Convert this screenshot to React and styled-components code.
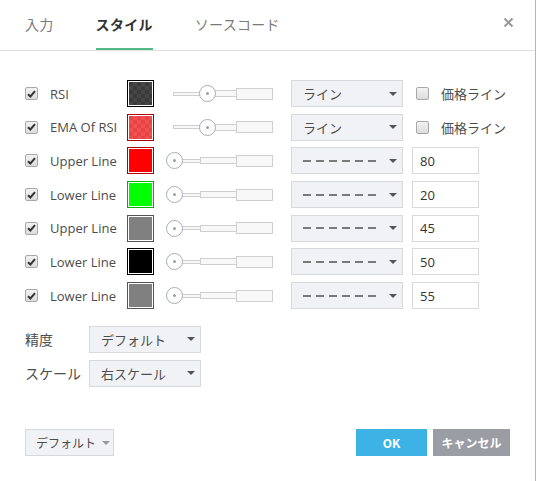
import React from "react";
import styled, { createGlobalStyle, css } from "styled-components";

const Global = createGlobalStyle`
  html, body { margin: 0; padding: 0; background: #fff; }
  body { font-family: "Open Sans", "Noto Sans CJK JP", sans-serif; color: #4d4d4d; }
  * { box-sizing: border-box; }
`;

const Dialog = styled.div`
  width: 536px;
  height: 481px;
  border-right: 1px solid #b5b5b5;
  display: flex;
  flex-direction: column;
  background: #fff;
`;

const Header = styled.div`
  height: 51px;
  border-bottom: 1px solid #e0e0e0;
  display: flex;
  align-items: flex-start;
  padding-left: 25px;
  padding-right: 21px;
  gap: 42px;
`;

const Tab = styled.div`
  height: 50px;
  line-height: 48px;
  font-size: 14px;
  font-family: "Noto Sans CJK JP", sans-serif;
  color: ${(p) => (p.$active ? "#333" : "#7a7a7a")};
  font-weight: ${(p) => (p.$active ? 700 : 400)};
  border-bottom: 2px solid ${(p) => (p.$active ? "#53b987" : "transparent")};
  letter-spacing: 0.3px;
`;

const Close = styled.div`
  margin-left: auto;
  margin-top: 17px;
  width: 11px;
  height: 11px;
  display: flex;
`;

const Body = styled.div`
  padding: 29px 0 0 25px;
  display: flex;
  flex-direction: column;
`;

const Rows = styled.div`
  display: flex;
  flex-direction: column;
  gap: 6.7px;
`;

const Row = styled.div`
  height: 27px;
  display: flex;
  align-items: center;
`;

const CheckBox = styled.div`
  width: 13px;
  height: 13px;
  border: 1px solid #a8a8a8;
  border-radius: 2px;
  background: linear-gradient(#f2f2f2, #dcdcdc);
  display: flex;
  align-items: center;
  justify-content: center;
  flex: none;
`;

const Label = styled.div`
  width: 77px;
  margin-left: 12px;
  font-size: 13px;
  color: #4d4d4d;
  white-space: nowrap;
`;

const Swatch = styled.div`
  width: 27px;
  height: 27px;
  border: 1px solid ${(p) => p.$border};
  padding: 1px;
  background: #fff;
  flex: none;
`;

const SwatchFill = styled.div`
  width: 100%;
  height: 100%;
  ${(p) =>
    p.$checker
      ? css`
          background: repeating-conic-gradient(${p.$a} 0 25%, ${p.$b} 0 50%) 0 0 / 8px 8px;
        `
      : css`
          background: ${p.$a};
        `}
`;

const Slider = styled.div`
  position: relative;
  width: 107px;
  height: 27px;
  margin-left: 12px;
  flex: none;
  display: flex;
  align-items: center;
  padding-left: 7px;
`;

const Seg = styled.div`
  height: ${(p) => p.$h}px;
  width: ${(p) => p.$w}px;
  border: 1px solid #cfcfcf;
  border-right: ${(p) => (p.$last ? "1px solid #cfcfcf" : "none")};
  background: #f8f8f8;
  flex: none;
`;

const Thumb = styled.div`
  position: absolute;
  top: 5px;
  width: 17px;
  height: 17px;
  border-radius: 50%;
  border: 1px solid #a9adb8;
  background: #fff;
  display: flex;
  align-items: center;
  justify-content: center;
  &::after {
    content: "";
    width: 3px;
    height: 3px;
    border-radius: 50%;
    background: #9a9ea8;
  }
`;

const Select = styled.div`
  width: ${(p) => p.$w || 112}px;
  height: 27px;
  margin-left: ${(p) => p.$ml || 0}px;
  background: #f1f2f5;
  border: 1px solid #d8d9dc;
  display: flex;
  align-items: center;
  padding: 0 5px 0 11px;
  font-size: 13px;
  font-family: "Noto Sans CJK JP", sans-serif;
  color: #4d4d4d;
  flex: none;
`;

const SelectText = styled.span`
  flex: 1;
`;

const Arrow = styled.span`
  width: 0;
  height: 0;
  margin-left: auto;
  border-left: 4px solid transparent;
  border-right: 4px solid transparent;
  border-top: 4px solid ${(p) => p.$c || "#555"};
`;

const Dashes = styled.div`
  width: 73px;
  height: 2px;
  background: repeating-linear-gradient(to right, #7a7a7a 0 8px, transparent 8px 13px);
`;

const PriceLine = styled.div`
  display: flex;
  align-items: center;
  margin-left: 13px;
  gap: 12px;
  font-size: 13px;
  font-family: "Noto Sans CJK JP", sans-serif;
  color: #4d4d4d;
`;

const NumInput = styled.div`
  width: 67px;
  height: 27px;
  margin-left: 9px;
  border: 1px solid #d9d9d9;
  background: #fff;
  font-size: 13px;
  color: #333;
  display: flex;
  align-items: center;
  padding-left: 7px;
`;

const Settings = styled.div`
  margin-top: 17px;
  display: flex;
  flex-direction: column;
  gap: 8px;
`;

const SetRow = styled.div`
  display: flex;
  align-items: center;
  height: 26px;
`;

const SetLabel = styled.div`
  width: 64px;
  font-size: 14px;
  font-family: "Noto Sans CJK JP", sans-serif;
  color: #4d4d4d;
`;

const Footer = styled.div`
  margin-top: 43px;
  display: flex;
  align-items: center;
  padding: 0 25px;
`;

const DefaultBtn = styled.div`
  width: 89px;
  height: 27px;
  background: #f1f2f5;
  border: 1px solid #d8d9dc;
  display: flex;
  align-items: center;
  gap: 6px;
  padding-left: 10px;
  font-size: 12px;
  font-family: "Noto Sans CJK JP", sans-serif;
  color: #4d4d4d;
`;

const Btn = styled.div`
  height: 27px;
  width: ${(p) => p.$w}px;
  background: ${(p) => p.$bg};
  color: #fff;
  font-weight: 700;
  font-size: 12px;
  font-family: "Noto Sans CJK JP", sans-serif;
  display: flex;
  align-items: center;
  justify-content: center;
  margin-left: ${(p) => p.$ml || 0}px;
`;

const Check = () => (
  <svg width="9" height="8" viewBox="0 0 9 8">
    <path d="M1 4.2 L3.4 6.5 L8 1.2" fill="none" stroke="#333" strokeWidth="2" />
  </svg>
);

const rows = [
  { label: "RSI", border: "#000", a: "#474747", b: "#3a3a3a", checker: true, kind: "line" },
  { label: "EMA Of RSI", border: "#b10000", a: "#f25050", b: "#e54545", checker: true, kind: "line" },
  { label: "Upper Line", border: "#b00000", a: "#ff0000", kind: "level", value: "80" },
  { label: "Lower Line", border: "#00b000", a: "#00ff00", kind: "level", value: "20" },
  { label: "Upper Line", border: "#555", a: "#808080", kind: "level", value: "45" },
  { label: "Lower Line", border: "#000", a: "#000000", kind: "level", value: "50" },
  { label: "Lower Line", border: "#555", a: "#808080", kind: "level", value: "55" },
];

export default function App() {
  return (
    <>
      <Global />
      <Dialog>
        <Header>
          <Tab>入力</Tab>
          <Tab $active>スタイル</Tab>
          <Tab>ソースコード</Tab>
          <Close>
            <svg width="11" height="11" viewBox="0 0 11 11">
              <path d="M1.5 1.5 L9.5 9.5 M9.5 1.5 L1.5 9.5" stroke="#999" strokeWidth="2" />
            </svg>
          </Close>
        </Header>
        <Body>
          <Rows>
            {rows.map((r, i) => (
              <Row key={i}>
                <CheckBox>
                  <Check />
                </CheckBox>
                <Label>{r.label}</Label>
                <Swatch $border={r.border}>
                  <SwatchFill $a={r.a} $b={r.b} $checker={r.checker} />
                </Swatch>
                <Slider>
                  <Seg $w={27} $h={4} />
                  <Seg $w={36} $h={7} />
                  <Seg $w={37} $h={12} $last />
                  <Thumb style={{ left: r.kind === "line" ? 33 : 0 }} />
                </Slider>
                {r.kind === "line" ? (
                  <>
                    <Select $ml={18} $w={112}>
                      <SelectText>ライン</SelectText>
                      <Arrow />
                    </Select>
                    <PriceLine>
                      <CheckBox />
                      価格ライン
                    </PriceLine>
                  </>
                ) : (
                  <>
                    <Select $ml={18} $w={112}>
                      <Dashes />
                      <Arrow />
                    </Select>
                    <NumInput>{r.value}</NumInput>
                  </>
                )}
              </Row>
            ))}
          </Rows>
          <Settings>
            <SetRow>
              <SetLabel>精度</SetLabel>
              <Select>
                <SelectText>デフォルト</SelectText>
                <Arrow />
              </Select>
            </SetRow>
            <SetRow>
              <SetLabel>スケール</SetLabel>
              <Select>
                <SelectText>右スケール</SelectText>
                <Arrow />
              </Select>
            </SetRow>
          </Settings>
        </Body>
        <Footer>
          <DefaultBtn>
            デフォルト
            <Arrow $c="#999" style={{ marginLeft: 0 }} />
          </DefaultBtn>
          <Btn $w={71} $bg="#3db2e4" style={{ marginLeft: "auto" }}>OK</Btn>
          <Btn $w={77} $bg="#9b9da4" $ml={6}>キャンセル</Btn>
        </Footer>
      </Dialog>
    </>
  );
}
